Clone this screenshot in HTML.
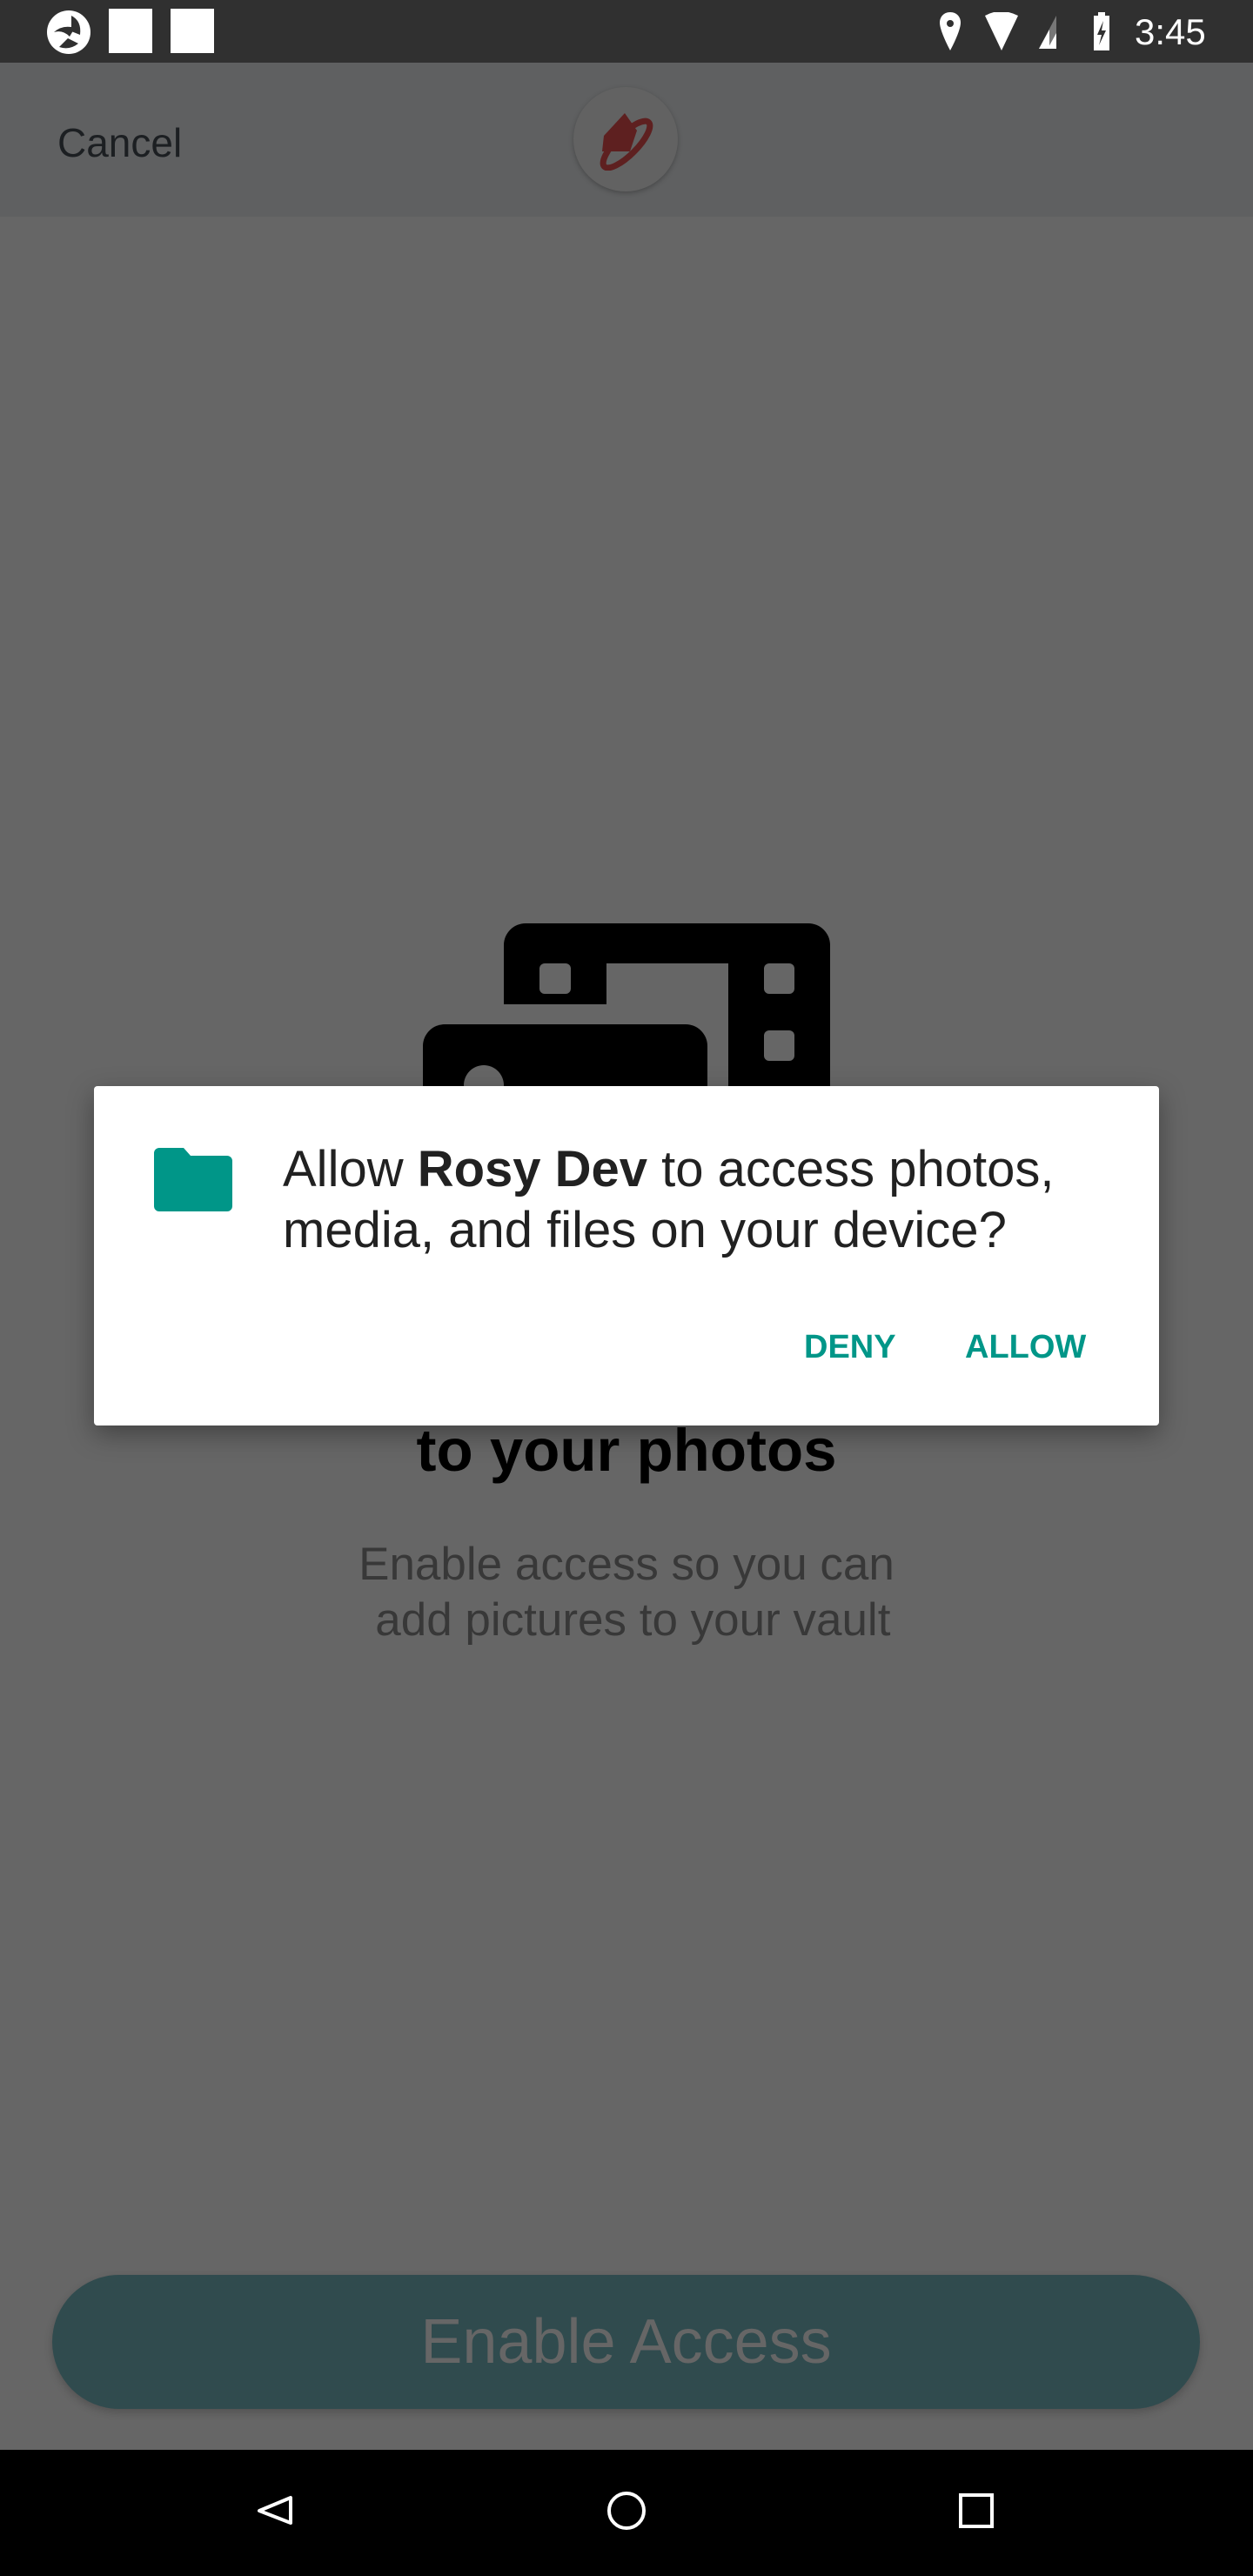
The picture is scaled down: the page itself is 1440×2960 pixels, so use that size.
<!DOCTYPE html>
<html><head><meta charset="utf-8"><style>
html,body{margin:0;padding:0;width:1440px;height:2960px;overflow:hidden;background:#666666;font-family:"Liberation Sans",Roboto,sans-serif;position:relative}
.abs{position:absolute}
</style></head><body>
<div class="abs" style="left:0;top:0;width:1440px;height:72px;background:#303030"></div>
<svg class="abs" style="left:52px;top:10px" width="54" height="54" viewBox="0 0 54 54"><circle cx="27" cy="27" r="25" fill="#fff"/><path d="M10 27 Q20 18 34 22 L28 32 Q20 24 10 27Z M30 8 Q42 14 40 30 L30 26Z M16 44 Q28 48 38 40 L26 34Z" fill="#303030"/></svg>
<div class="abs" style="left:125px;top:10px;width:50px;height:51px;background:#fff"></div>
<div class="abs" style="left:196px;top:10px;width:50px;height:51px;background:#fff"></div>
<svg class="abs" style="left:1080px;top:14px" width="240" height="46" viewBox="0 0 240 46"><path d="M12 0 C4 0 0 6 0 12 C0 22 12 44 12 44 C12 44 24 22 24 12 C24 6 20 0 12 0Z" fill="#fff"/><circle cx="12" cy="13" r="4" fill="#303030"/><path d="M52 4 Q70 -6 90 4 L71 44Z" fill="#fff"/><path d="M134 42 L134 4 L114 42Z" fill="#777"/><path d="M124 42 L134 42 L134 24Z" fill="#fff"/><path d="M114 42 L126 20 L126 42Z" fill="#fff"/><rect x="177" y="4" width="18" height="40" fill="#fff"/><rect x="182" y="0" width="8" height="5" fill="#fff"/><path d="M188 10 L181 26 L186 26 L183 38 L191 21 L186 21Z" fill="#303030"/></svg>
<div class="abs" style="left:1304px;top:14px;color:#fff;font-size:42px;line-height:46px">3:45</div>
<div class="abs" style="left:0;top:72px;width:1440px;height:177px;background:#5f6061"></div>
<div class="abs" style="left:66px;top:138px;color:#1c1f22;font-size:46px;line-height:52px">Cancel</div>
<div class="abs" style="left:659px;top:100px;width:120px;height:120px;border-radius:50%;background:#626262;box-shadow:0 2px 6px rgba(0,0,0,.25)"></div>
<svg class="abs" style="left:680px;top:128px" width="80" height="68" viewBox="0 0 80 68"><path d="M38 2 L52 22 L44 46 L12 46 L14 28Z" fill="#5e2020"/><ellipse cx="40" cy="38" rx="36" ry="12" transform="rotate(-45 40 38)" fill="none" stroke="#5e2020" stroke-width="7"/></svg>
<svg class="abs" style="left:486px;top:1060px" width="470" height="200" viewBox="486 1060 470 200">
<path d="M604 1061 H929 A25 25 0 0 1 954 1086 V1260 H837 V1107 H697 V1154 H579 V1086 A25 25 0 0 1 604 1061Z" fill="#000"/>
<rect x="620" y="1107" width="36" height="35" rx="6" fill="#666"/>
<rect x="878" y="1107" width="35" height="35" rx="6" fill="#666"/>
<rect x="878" y="1184" width="35" height="35" rx="6" fill="#666"/>
<path d="M511 1177 H788 A25 25 0 0 1 813 1202 V1260 H486 V1202 A25 25 0 0 1 511 1177Z" fill="#000"/>
<circle cx="556" cy="1247" r="23" fill="#666"/>
</svg>
<div class="abs" style="left:0;top:1622px;width:1440px;text-align:center;font-weight:bold;font-size:69px;line-height:90px;color:#000">to your photos</div>
<div class="abs" style="left:0;top:1766px;width:1440px;text-align:center;font-size:53px;line-height:64px;color:#383838">Enable access so you can<br>&nbsp;add pictures to your vault</div>
<div class="abs" style="left:108px;top:1248px;width:1224px;height:390px;background:#fff;border-radius:4px;box-shadow:0 10px 30px rgba(0,0,0,.35)">
<svg class="abs" style="left:69px;top:71px" width="90" height="73" viewBox="0 0 90 73"><path d="M6 0 H34 L42 9 H84 A6 6 0 0 1 90 15 V67 A6 6 0 0 1 84 73 H6 A6 6 0 0 1 0 67 V6 A6 6 0 0 1 6 0Z" fill="#009688"/></svg>
<div class="abs" style="left:217px;top:61px;width:980px;font-size:58px;line-height:70px;color:#212121">Allow <b>Rosy Dev</b> to access photos, media, and files on your device?</div>
<div class="abs" style="left:816px;top:274px;font-size:38px;line-height:52px;color:#009688;font-weight:bold">DENY</div>
<div class="abs" style="left:1001px;top:274px;font-size:38px;line-height:52px;color:#009688;font-weight:bold">ALLOW</div>
</div>
<div class="abs" style="left:60px;top:2614px;width:1319px;height:154px;border-radius:77px;background:#304b4e;box-shadow:0 4px 10px rgba(0,0,0,.2);text-align:center;line-height:154px;font-size:72px;color:#666">Enable Access</div>
<div class="abs" style="left:0;top:2815px;width:1440px;height:145px;background:#000"></div>
<svg class="abs" style="left:0;top:2815px" width="1440" height="145" viewBox="0 0 1440 145"><path d="M334 55 L334 84 L298 70Z" fill="none" stroke="#fff" stroke-width="4" stroke-linejoin="round"/><circle cx="720" cy="70" r="20" fill="none" stroke="#fff" stroke-width="4"/><rect x="1104" y="52" width="36" height="36" fill="none" stroke="#fff" stroke-width="4"/></svg>
</body></html>
